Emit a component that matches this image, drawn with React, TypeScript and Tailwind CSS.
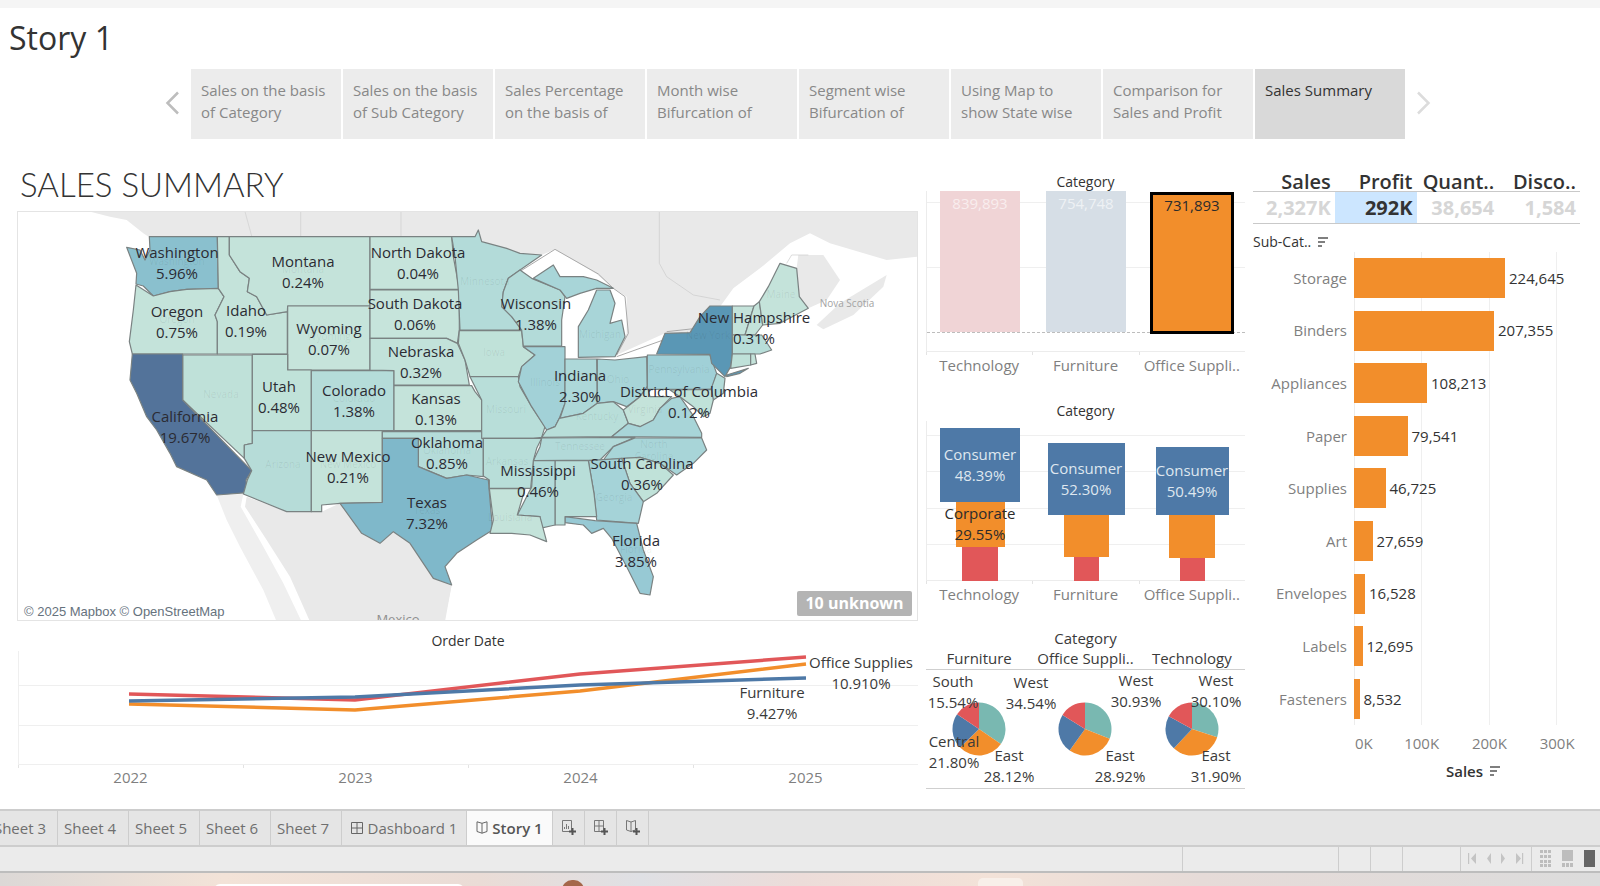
import type { ReactNode } from "react";

const tabs = [
  ["Sales on the basis", "of Category"],
  ["Sales on the basis", "of Sub Category"],
  ["Sales Percentage", "on the basis of"],
  ["Month wise", "Bifurcation of"],
  ["Segment wise", "Bifurcation of"],
  ["Using Map to", "show State wise"],
  ["Comparison for", "Sales and Profit"],
];

// state shapes, traced in 3x crop coordinates
const westStates: [string, string][] = [
  ["448,110 652,110 655,265 560,268 510,275 460,288 430,258 408,252 410,220 380,142 420,150 435,180 450,150", "#8ac0ce"],
  ["408,255 460,288 510,275 560,268 655,265 672,290 645,345 652,365 652,462 397,462 388,425 400,330", "#c4e3da"],
  ["548,465 757,465 757,730 733,735 733,775 548,600", "#bfe1d9"],
  ["397,462 548,462 548,600 755,812 738,840 742,878 650,885 620,840 530,800 510,760 470,690 440,650 410,580 390,540", "#53739a"],
  ["652,110 688,110 688,165 720,215 748,235 742,275 770,290 800,345 862,335 862,462 652,462 652,365 645,345 672,290 655,265", "#c4e3da"],
  ["688,110 1110,110 1110,318 863,318 862,335 800,345 770,290 742,275 748,235 720,215 688,165", "#c4e3da"],
  ["863,318 1110,318 1110,510 863,510", "#c6e4db"],
  ["757,463 863,463 863,510 934,510 934,692 757,692", "#c0e2d9"],
  ["934,512 1182,512 1182,692 934,692", "#b5dcd9"],
  ["757,692 934,692 934,935 860,935 730,882 742,840 755,812 733,775 733,735 757,730", "#b6dcd8"],
  ["934,692 1147,692 1147,907 1020,910 965,915 965,935 934,935", "#c4e3da"],
  ["1110,110 1355,110 1360,170 1378,268 1110,268", "#c6e4db"],
  ["1110,270 1378,270 1378,390 1372,430 1340,415 1110,415", "#c6e4db"],
  ["1110,415 1340,415 1372,430 1395,480 1408,555 1182,555 1182,512 1110,510", "#c2e2da"],
  ["1182,557 1415,557 1425,575 1445,600 1445,692 1182,692", "#c4e3da"],
  ["1147,695 1450,695 1450,830 1400,825 1340,835 1255,800 1255,715 1147,715", "#b5dcd9"],
  ["1147,715 1255,715 1255,800 1340,835 1400,825 1465,840 1470,900 1478,990 1430,1020 1370,1060 1335,1100 1355,1155 1300,1135 1270,1090 1230,1030 1180,995 1140,1030 1085,1000 1020,910 1147,907", "#7fb8ca"],
];

const eastStates: [string, string][] = [
  ["35,110 105,110 115,90 125,125 200,145 240,160 305,165 240,210 205,235 190,275 185,320 215,350 245,390 60,390 55,270 45,170", "#b3dbd9"],
  ["58,392 245,392 250,440 285,465 245,500 235,530 90,530 75,480 55,430", "#c0e2d9"],
  ["90,530 235,530 240,560 275,620 315,680 305,712 280,715 125,715 125,600 105,560", "#b8ded9"],
  ["205,235 240,210 275,235 360,270 375,290 365,360 365,438 250,438 245,390 215,350 185,320 190,275", "#b3dbd9"],
  ["250,440 375,440 375,610 358,655 345,680 320,690 275,620 235,545 245,500 285,465", "#a2d1d7"],
  ["415,472 415,380 445,330 470,270 510,270 525,310 510,370 545,360 555,410 525,470", "#a8d5d8"],
  ["280,235 340,195 360,230 430,230 470,240 520,265 470,265 420,280 380,295 360,270", "#a8d5d8"],
  ["375,477 470,477 472,610 430,640 360,655 375,610", "#add8d9"],
  ["472,477 525,480 620,470 622,560 600,590 560,620 520,605 472,610", "#a8d5d8"],
  ["358,655 430,640 472,610 520,605 550,630 565,670 515,710 305,712 320,690 345,680", "#b8ded9"],
  ["550,630 600,590 622,560 630,590 695,590 660,625 640,660 600,680 565,670", "#c4e3da"],
  ["622,465 810,465 830,520 815,568 622,568", "#a0d0d7"],
  ["650,462 675,400 750,398 780,350 810,318 877,318 877,460 872,500 855,530 815,490 810,463", "#5a97b5"],
  ["860,525 925,505 900,520 860,530", "#5a97b5"],
  ["877,318 942,318 915,405 877,405", "#c4e3da"],
  ["942,318 958,305 968,375 945,405 915,405", "#c4e3da"],
  ["958,305 985,260 1020,190 1070,205 1078,290 1105,325 1020,370 968,375", "#c4e3da"],
  ["877,405 965,405 995,450 960,462 877,462", "#b8ded9"],
  ["877,462 932,462 932,495 872,505", "#bfe1d9"],
  ["932,462 945,462 950,490 932,495", "#c4e3da"],
  ["830,520 855,535 850,580 820,600 812,570", "#b3dbd9"],
  ["515,710 565,670 600,680 640,660 660,625 695,595 720,590 755,640 785,700 785,712", "#a8d5d8"],
  ["690,570 815,568 820,600 810,640 790,650 760,620 720,590", "#c0e2d9"],
  ["305,714 585,712 520,740 480,780 280,782 300,740", "#b2dad9"],
  ["585,714 785,714 800,750 760,790 710,825 660,790 600,772 490,780 520,740", "#a8d5d8"],
  ["545,775 600,772 660,790 700,825 650,880 610,905 570,850", "#c0e2d9"],
  ["445,782 545,775 570,850 610,905 595,970 470,960 462,880", "#a5d3d8"],
  ["375,950 465,962 590,970 610,1050 640,1130 630,1185 600,1180 560,1100 515,1015 490,985 455,1000 430,975 375,968", "#97c9d4"],
  ["345,782 445,782 462,880 470,950 375,950 375,975 345,975", "#b8ded9"],
  ["280,782 345,782 345,975 300,985 300,950 232,945 255,900 275,860", "#b3dbd9"],
  ["130,715 305,715 290,745 280,782 272,865 148,865 148,840 130,828", "#b8ded9"],
  ["148,866 255,866 232,945 300,950 320,1025 270,1005 215,1000 150,1000 160,960", "#c4e3da"],
];

const stateLabels: [string, string, number, number][] = [
  ["Washington", "5.96%", 177, 252],
  ["Montana", "0.24%", 303, 261],
  ["North Dakota", "0.04%", 418, 252],
  ["South Dakota", "0.06%", 415, 303],
  ["Oregon", "0.75%", 177, 311],
  ["Idaho", "0.19%", 246, 310],
  ["Wyoming", "0.07%", 329, 328],
  ["Nebraska", "0.32%", 421, 351],
  ["Utah", "0.48%", 279, 386],
  ["Colorado", "1.38%", 354, 390],
  ["Kansas", "0.13%", 436, 398],
  ["California", "19.67%", 185, 416],
  ["New Mexico", "0.21%", 348, 456],
  ["Oklahoma", "0.85%", 447, 442],
  ["Texas", "7.32%", 427, 502],
  ["Wisconsin", "1.38%", 536, 303],
  ["Indiana", "2.30%", 580, 375],
  ["District of Columbia", "0.12%", 689, 391],
  ["New Hampshire", "0.31%", 754, 317],
  ["Mississippi", "0.46%", 538, 470],
  ["South Carolina", "0.36%", 642, 463],
  ["Florida", "3.85%", 636, 540],
];

const faintLabels: [string, number, number][] = [
  ["Nevada", 221, 394], ["Arizona", 283, 464], ["Minnesota", 485, 281], ["Iowa", 494, 352],
  ["Illinois", 545, 382], ["Michigan", 600, 334], ["Ohio", 618, 379], ["Pennsylvania", 679, 369],
  ["New York", 708, 335], ["Missouri", 506, 409], ["Kentucky", 597, 416], ["Tennessee", 580, 446],
  ["North", 654, 444], ["Carolina", 654, 456], ["Virginia", 645, 409], ["Arkansas", 507, 461],
  ["Louisiana", 510, 517], ["Georgia", 614, 497], ["Maine", 781, 294], ["Montana", 303, 269],
  ["Colorado", 354, 398], ["Texas", 427, 510], ["Oregon", 177, 319], ["Washington", 177, 261],
  ["Wyoming", 329, 336], ["New Mexico", 348, 464], ["Florida", 636, 549], ["Oklahoma", 447, 450],
];

const subCategories: [string, number, string][] = [
  ["Storage", 151, "224,645"],
  ["Binders", 140, "207,355"],
  ["Appliances", 73, "108,213"],
  ["Paper", 53.5, "79,541"],
  ["Supplies", 31.5, "46,725"],
  ["Art", 18.5, "27,659"],
  ["Envelopes", 11, "16,528"],
  ["Labels", 8.5, "12,695"],
  ["Fasteners", 5.5, "8,532"],
];

const pies = [
  [34.54, 28.12, 21.8, 15.54],
  [30.93, 28.92, 24, 16.15],
  [30.1, 31.9, 21, 17],
];

function Pie({ shares }: { shares: number[] }) {
  const colors = ["#79b8b1", "#f28e2b", "#4e79a7", "#e15759"];
  let acc = 0;
  return (
    <svg width="54" height="54" viewBox="-27 -27 54 54">
      {shares.map((s, i) => {
        const a0 = (acc / 100) * Math.PI * 2;
        acc += s;
        const a1 = (acc / 100) * Math.PI * 2;
        const d = `M0 0L${26.5 * Math.sin(a0)} ${-26.5 * Math.cos(a0)}A26.5 26.5 0 ${s > 50 ? 1 : 0} 1 ${26.5 * Math.sin(a1)} ${-26.5 * Math.cos(a1)}Z`;
        return <path key={i} d={d} fill={colors[i]} />;
      })}
    </svg>
  );
}

function SortIcon() {
  return (
    <svg width="11" height="10" viewBox="0 0 11 10" className="shrink-0">
      <path d="M1 1h10M1 5h7M1 9h4" stroke="#555" strokeWidth="1.6" />
    </svg>
  );
}

function TwoLine({ className, children }: { className: string; children: ReactNode }) {
  return (
    <div className={`absolute -translate-x-1/2 whitespace-nowrap text-center text-[15px] leading-[21px] ${className}`}>
      {children}
    </div>
  );
}

function MapPanel() {
  return (
    <div className="relative h-[410px] w-[901px] overflow-hidden border border-[#e4e4e4] bg-white">
      <svg className="absolute -left-px -top-px" width="901" height="410" viewBox="17 211 901 410">
        <g transform="translate(0 200) scale(0.33333)">
          <polygon points="270,35 1440,35 1440,112 448,112 430,100 380,60 330,50" fill="#e9e9e9" />
          <polygon points="650,885 730,882 722,920 790,1040 850,1150 905,1265 830,1265 790,1170 720,1040 680,960" fill="#efefef" />
          <polygon points="740,890 860,935 965,935 1020,910 1085,1000 1140,1030 1180,995 1230,1030 1270,1090 1300,1135 1355,1155 1335,1265 930,1265 870,1130 800,1020 735,920" fill="#e9e9e9" />
          <path d="M902 35V110M1203 35V110M735 35L755 108" stroke="#cfcfcf" strokeWidth="2" fill="none" />
        </g>
        <g transform="translate(440 200) scale(0.33333)">
          <polygon points="-5,35 1433,35 1433,170 1340,180 1170,130 1110,100 1050,130 960,205 880,265 840,320 780,350 750,398 675,400 530,465 560,400 560,290 520,265 470,222 345,148 305,165 240,160 200,145 125,125 115,90 105,110 -5,110" fill="#e9e9e9" />
          <polygon points="1075,165 1150,165 1200,240 1160,300 1105,325 1078,290 1070,205" fill="#e9e9e9" />
          <polygon points="1130,375 1200,310 1340,225 1330,260 1240,345 1150,388" fill="#e9e9e9" />
          <polygon points="-5,1150 35,1155 12,1265 -5,1265" fill="#e9e9e9" />
          <path d="M658 35V190L680 230L760 285L840 300M1040 190L1055 165L1105 165" stroke="#cacaca" strokeWidth="2" fill="none" />
          <path d="M215 230L345 148L475 222L520 265L555 290L565 400L530 465M530 470L670 420M680 395L770 385" stroke="#a9a9a9" strokeWidth="3" fill="none" />
        </g>
        <g transform="translate(0 200) scale(0.33333)">
          {westStates.map(([points, fill], i) => (
            <polygon key={i} points={points} fill={fill} stroke="#7a8282" strokeWidth="3.6" strokeLinejoin="round" />
          ))}
        </g>
        <g transform="translate(440 200) scale(0.33333)">
          {eastStates.map(([points, fill], i) => (
            <polygon key={i} points={points} fill={fill} stroke="#7a8282" strokeWidth="3.6" strokeLinejoin="round" />
          ))}
        </g>
        {faintLabels.map(([t, x, y]) => (
          <text key={t + x} x={x} y={y} textAnchor="middle" dominantBaseline="central" fontSize="10" fill="#000" fillOpacity="0.08">
            {t}
          </text>
        ))}
        <text x="847" y="303" textAnchor="middle" dominantBaseline="central" fontSize="10" fill="#a3a3a3">Nova Scotia</text>
        <text x="398" y="619" textAnchor="middle" dominantBaseline="central" fontSize="13" fill="#8f8f8f">Mexico</text>
        {stateLabels.map(([name, pct, x, y]) => (
          <g key={name} fontSize="15" fill="#2b2b33" textAnchor="middle" dominantBaseline="central">
            <text x={x} y={y}>{name}</text>
            <text x={x} y={y + 21}>{pct}</text>
          </g>
        ))}
      </svg>
      <div className="absolute bottom-0 left-[3px] bg-white/80 px-[3px] font-['Liberation_Sans',sans-serif] text-[13px] leading-[16px] text-[#66727d]">
        © 2025 Mapbox © OpenStreetMap
      </div>
      <div className="absolute bottom-[4px] right-[5px] flex h-[25px] w-[115px] items-center justify-center rounded-[2px] bg-[#b4b4b4] text-[16px] font-bold text-white">
        10 unknown
      </div>
    </div>
  );
}

function LineChart() {
  return (
    <div className="ml-px flex w-[900px] flex-col">
      <div className="mt-[10px] h-5 text-center text-[14px] leading-5 text-[#333]">Order Date</div>
      <div className="relative h-[114px]">
        <svg className="absolute inset-0" width="900" height="114" viewBox="18 651 900 114">
          <path d="M18 685.5H918M18 725.5H918M18 764.5H918M18.5 651V765" stroke="#efefef" fill="none" />
          <polyline points="129,704 355,710 580,691 806,664" fill="none" stroke="#f28e2b" strokeWidth="3.5" />
          <polyline points="129,694 355,700 580,674 806,657" fill="none" stroke="#e15759" strokeWidth="3.5" />
          <polyline points="129,701 355,697 580,685 806,678" fill="none" stroke="#4e79a7" strokeWidth="3.5" />
        </svg>
        <TwoLine className="left-[843px] top-[1px] text-[#3a3a3a]">
          Office Supplies
          <br />
          10.910%
        </TwoLine>
        <TwoLine className="left-[754px] top-[31px] text-[#3a3a3a]">
          Furniture
          <br />
          9.427%
        </TwoLine>
      </div>
      <div className="grid grid-cols-4">
        {["2022", "2023", "2024", "2025"].map((y) => (
          <div key={y} className="flex flex-col">
            <div className="h-[3px] w-px bg-[#e3e3e3]" />
            <div className="text-center text-[15px] leading-[18px] text-[#7f7f7f]">{y}</div>
          </div>
        ))}
      </div>
    </div>
  );
}

function CategoryAxis() {
  return (
    <div className="grid grid-cols-3">
      {["Technology", "Furniture", "Office Suppli.."].map((c) => (
        <div key={c} className="flex flex-col">
          <div className="h-[3px] w-px bg-[#e3e3e3]" />
          <div className="text-center text-[15px] leading-[20px] text-[#7f7f7f]">{c}</div>
        </div>
      ))}
    </div>
  );
}

function SalesBars() {
  return (
    <div className="flex flex-col">
      <div className="h-[19px] text-center text-[14px] leading-5 text-[#333]">Category</div>
      <div className="relative h-[161px] border-b border-l border-[#ececec]">
        <div className="absolute inset-x-0 top-[11px] h-px bg-[#efefef]" />
        <div className="absolute inset-x-0 top-[76px] h-px bg-[#efefef]" />
        <div className="absolute inset-x-0 top-[141px] border-t border-dashed border-[#bdbdbd]" />
        <div className="relative grid h-[141px] grid-cols-3 items-end justify-items-center">
          <div className="h-[141px] w-[80px] bg-[#f0d4d6] pt-[2px] text-center text-[15px] leading-[20px] text-white/60">839,893</div>
          <div className="h-[141px] w-[80px] bg-[#d6dee6] pt-[2px] text-center text-[15px] leading-[20px] text-white/60">754,748</div>
          <div className="-mb-[2px] h-[142px] w-[84px] border-[3px] border-black bg-[#f28e2b] text-center text-[15px] leading-[20px] text-[#2b2b2b]">731,893</div>
        </div>
      </div>
      <CategoryAxis />
    </div>
  );
}

function SegmentColumn({ blue, orange, red, top, mid }: { blue: string; orange: string; red: string; top: string; mid?: string }) {
  return (
    <div className="flex h-[160px] flex-col items-center justify-end">
      <div className={`flex items-center justify-center bg-[#4e79a7] text-center text-[15px] leading-[21px] text-[#dfe7ef] ${blue}`}>
        <div>
          Consumer
          <br />
          {top}
        </div>
      </div>
      <div className={`flex items-center justify-center overflow-visible whitespace-nowrap bg-[#f28e2b] text-center text-[15px] leading-[21px] text-[#2b2b2b] ${orange}`}>
        {mid && (
          <div>
            Corporate
            <br />
            {mid}
          </div>
        )}
      </div>
      <div className={`bg-[#e15759] ${red}`} />
    </div>
  );
}

function SegmentBars() {
  return (
    <div className="flex flex-col">
      <div className="mt-[26px] h-5 text-center text-[14px] leading-5 text-[#333]">Category</div>
      <div className="relative h-[160px] border-b border-l border-[#ececec]">
        <div className="absolute inset-x-0 top-[14px] h-px bg-[#efefef]" />
        <div className="absolute inset-x-0 top-[50px] h-px bg-[#efefef]" />
        <div className="absolute inset-x-0 top-[87px] h-px bg-[#efefef]" />
        <div className="absolute inset-x-0 top-[123px] h-px bg-[#efefef]" />
        <div className="relative grid grid-cols-3">
          <SegmentColumn blue="h-[74px] w-[80px]" orange="h-[45px] w-[49px]" red="h-[34px] w-[36px]" top="48.39%" mid="29.55%" />
          <SegmentColumn blue="h-[72px] w-[77px]" orange="h-[42px] w-[45px]" red="h-[24px] w-[25px]" top="52.30%" />
          <SegmentColumn blue="h-[68px] w-[73px]" orange="h-[43px] w-[46px]" red="h-[23px] w-[25px]" top="50.49%" />
        </div>
      </div>
      <CategoryAxis />
    </div>
  );
}

function RegionPies() {
  return (
    <div className="mt-[24px] flex flex-col">
      <div className="h-[20px] text-center text-[15px] leading-5 text-[#3a3a3a]">Category</div>
      <div className="grid h-[22px] grid-cols-3 border-b border-[#cfcfcf] text-center text-[15px] leading-5 text-[#3a3a3a]">
        <div>Furniture</div>
        <div>Office Suppli..</div>
        <div>Technology</div>
      </div>
      <div className="relative grid h-[119px] grid-cols-3 place-items-center border-b border-[#cfcfcf] text-[#3a3a3a]">
        {pies.map((p, i) => (
          <Pie key={i} shares={p} />
        ))}
        <TwoLine className="left-[27px] top-[1px]">South<br />15.54%</TwoLine>
        <TwoLine className="left-[105px] top-[2px]">West<br />34.54%</TwoLine>
        <TwoLine className="left-[28px] top-[61px]">Central<br />21.80%</TwoLine>
        <TwoLine className="left-[83px] top-[75px]">East<br />28.12%</TwoLine>
        <TwoLine className="left-[210px] top-[0px]">West<br />30.93%</TwoLine>
        <TwoLine className="left-[194px] top-[75px]">East<br />28.92%</TwoLine>
        <TwoLine className="left-[290px] top-[0px]">West<br />30.10%</TwoLine>
        <TwoLine className="left-[290px] top-[75px]">East<br />31.90%</TwoLine>
      </div>
    </div>
  );
}

function RightPanel() {
  return (
    <div className="flex w-[327px] flex-col">
      <div className="grid h-[20px] grid-cols-4 border-b border-[#c9c9c9] text-right text-[20px] font-semibold leading-[20px] text-[#333]">
        {["Sales", "Profit", "Quant..", "Disco.."].map((h) => (
          <div key={h} className="whitespace-nowrap pr-[4px]">{h}</div>
        ))}
      </div>
      <div className="grid h-[32px] grid-cols-4 border-b border-[#c9c9c9] text-right text-[20px] font-bold leading-[31px] text-[#d6d6d6]">
        <div className="pr-[4px]">2,327K</div>
        <div className="bg-[#cce6ff] pr-[4px] text-[#333]">292K</div>
        <div className="pr-[4px]">38,654</div>
        <div className="pr-[4px]">1,584</div>
      </div>
      <div className="flex h-[28px] items-center gap-[6px] pt-[8px] text-[14px] text-[#333]">
        Sub-Cat..
        <SortIcon />
      </div>
      <div className="relative">
        <div className="absolute bottom-0 left-[101px] top-0 w-px bg-[#ececec]" />
        <div className="absolute bottom-0 left-[168px] top-0 w-px bg-[#efefef]" />
        <div className="absolute bottom-0 left-[236px] top-0 w-px bg-[#efefef]" />
        <div className="absolute bottom-0 left-[303px] top-0 w-px bg-[#efefef]" />
        {subCategories.map(([name, w, val]) => (
          <div key={name} className="relative flex h-[52.6px] items-center">
            <div className="w-[101px] shrink-0 pr-[7px] text-right text-[15px] text-[#7f7f7f]">{name}</div>
            <div className="h-10 bg-[#f28e2b]" style={{ width: w }} />
            <div className="pl-[4px] text-[15px] text-[#333]">{val}</div>
          </div>
        ))}
      </div>
      <div className="ml-[67px] grid h-[30px] w-[271px] grid-cols-4 pt-[8px] text-center text-[15px] leading-[20px] text-[#7f7f7f]">
        <div className="pl-[20px]">0K</div>
        <div>100K</div>
        <div>200K</div>
        <div>300K</div>
      </div>
      <div className="ml-[170px] flex h-[20px] w-[100px] items-center justify-center gap-[6px] pt-[12px] text-[15px] font-semibold text-[#333]">
        Sales
        <SortIcon />
      </div>
    </div>
  );
}

function NewSheetIcon({ kind }: { kind: "sheet" | "dash" | "story" }) {
  return (
    <svg width="16" height="16" viewBox="0 0 16 16" fill="none">
      {kind === "sheet" && <path d="M1.5 .5H10.5V11.5H1.5ZM3.5 9V7M5.5 9V4M7.5 9V6" stroke="#777" />}
      {kind === "dash" && <path d="M1.5 .5H10.5V11.5H1.5ZM1.5 6H10.5M6 .5V11.5" stroke="#777" />}
      {kind === "story" && <path d="M1.5 .5L6 2L10.5 .5V10L6 11.5L1.5 10ZM6 2V11.5" stroke="#777" />}
      <path d="M11.5 8V15M8 11.5H15" stroke="#555" strokeWidth="2" />
    </svg>
  );
}

function BottomBars() {
  return (
    <div className="flex flex-col">
      <div className="flex h-[38px] border-y-2 border-[#cdcdcd] bg-[#e5e5e5] text-[15px] text-[#6f6f6f]">
        <div className="flex w-[58px] items-center justify-end overflow-hidden border-r border-[#cdcdcd] pr-[11px]">
          <span className="shrink-0">Sheet 3</span>
        </div>
        {["Sheet 4", "Sheet 5", "Sheet 6", "Sheet 7"].map((s) => (
          <div key={s} className="flex w-[71px] items-center border-r border-[#cdcdcd] pl-[6px]">{s}</div>
        ))}
        <div className="flex w-[125px] items-center justify-center gap-[5px] border-r border-[#cdcdcd]">
          <svg width="12" height="12" viewBox="0 0 12 12" fill="none">
            <path d="M.5 .5H11.5V11.5H.5ZM.5 6H11.5M6 .5V11.5" stroke="#666" />
          </svg>
          Dashboard 1
        </div>
        <div className="flex w-[86px] items-center justify-center gap-[4px] border-r border-[#cdcdcd] bg-[#fafafa] font-semibold text-[#555]">
          <svg width="12" height="13" viewBox="0 0 12 13" fill="none">
            <path d="M1 .8L6 2.3L11 .8V10.5L6 12.2L1 10.5ZM6 2.3V12.2" stroke="#666" />
          </svg>
          Story 1
        </div>
        <div className="flex w-[32px] items-center justify-center border-r border-[#cdcdcd]"><NewSheetIcon kind="sheet" /></div>
        <div className="flex w-[32px] items-center justify-center border-r border-[#cdcdcd]"><NewSheetIcon kind="dash" /></div>
        <div className="flex w-[32px] items-center justify-center border-r border-[#cdcdcd]"><NewSheetIcon kind="story" /></div>
      </div>
      <div className="flex h-[26px] border-b-2 border-[#bdbdbd] bg-[#ebebeb]">
        <div className="w-[1183px] border-r border-[#cdcdcd]" />
        <div className="w-[156px] border-r border-[#cdcdcd]" />
        <div className="w-[32px] border-r border-[#cdcdcd]" />
        <div className="w-[32px] border-r border-[#cdcdcd]" />
        <div className="w-[58px] border-r border-[#cdcdcd]" />
        <div className="flex w-[71px] items-center justify-center border-r border-[#cdcdcd]">
          <svg width="56" height="11" viewBox="0 0 56 11" fill="#c4c4c4">
            <path d="M0 0h1.2v11H0zM8 0v11L3 5.5zM23 0v11l-4-5.5zM33 0v11l4-5.5zM48 0v11l5-5.5zM54 0h1.2v11H54z" />
          </svg>
        </div>
        <div className="flex flex-1 items-center gap-[10px] pl-[8px]">
          <svg width="12" height="17" viewBox="0 0 12 17" fill="#bdbdbd">
            <path d="M0 0h3v3H0zM4 0h3v3H4zM8 0h3v3H8zM0 5h3v3H0zM4 5h3v3H4zM8 5h3v3H8zM0 10h3v3H0zM4 10h3v3H4zM8 10h3v3H8zM0 14h3v3H0zM4 14h3v3H4zM8 14h3v3H8z" />
          </svg>
          <svg width="12" height="17" viewBox="0 0 12 17" fill="#bdbdbd">
            <path d="M0 0h11v11H0zM0 13h3v4H0zM4 13h3v4H4zM8 13h3v4H8z" />
          </svg>
          <div className="h-[17px] w-[11px] bg-[#666]" />
        </div>
      </div>
      <div className="relative h-[13px] overflow-hidden bg-[linear-gradient(90deg,#dcd8d6_0%,#f3e3d8_14%,#eadcd6_30%,#dfe0e4_40%,#ecdcd9_50%,#f3e2d8_62%,#e6dbd8_75%,#dcdcdc_100%)]">
        <div className="absolute left-[214px] top-[11px] h-[10px] w-[250px] rounded-t-[6px] bg-white" />
        <div className="absolute left-[562px] top-[7px] h-[20px] w-[22px] rounded-full bg-[#a5674a]" />
        <div className="absolute left-[978px] top-[5px] h-[20px] w-[45px] rounded-t-[5px] bg-[#f8efe9]" />
      </div>
    </div>
  );
}

export default function App() {
  return (
    <div className="flex h-[886px] w-[1600px] flex-col overflow-hidden bg-white font-['Open_Sans',sans-serif]">
      <div className="h-2 bg-[#f5f5f5]" />
      <div className="flex h-[60px] items-center pl-[9px] text-[32px] text-[#333]">Story 1</div>

      <div className="mt-px flex h-[70px] pl-[165px]">
        <div className="flex w-[26px] items-center pb-[2px]">
          <svg width="15" height="24" viewBox="0 0 15 24" fill="none">
            <path d="M13 1.5L2.5 12L13 22.5" stroke="#bdbdbd" strokeWidth="2.5" />
          </svg>
        </div>
        <div className="flex gap-[2px]">
          {tabs.map((t) => (
            <div key={t[0] + t[1]} className="w-[150px] bg-[#ececec] px-[10px] pt-[10px] text-[15px] leading-[22px] text-[#888]">
              {t[0]}
              <br />
              {t[1]}
            </div>
          ))}
          <div className="w-[150px] bg-[#d9d9d9] px-[10px] pt-[10px] text-[15px] leading-[22px] text-[#333]">Sales Summary</div>
        </div>
        <div className="flex w-[26px] items-center justify-end pb-[2px]">
          <svg width="15" height="24" viewBox="0 0 15 24" fill="none">
            <path d="M2 1.5L12.5 12L2 22.5" stroke="#dcdcdc" strokeWidth="2.5" />
          </svg>
        </div>
      </div>

      <div className="mt-[33px] flex h-[638px] gap-2 pl-[17px]">
        <div className="flex w-[901px] flex-col">
          <div className="h-[39px] pl-[3px] font-['Lato',sans-serif] text-[33px] font-light leading-[24px] text-[#333]">SALES SUMMARY</div>
          <MapPanel />
          <LineChart />
        </div>
        <div className="flex w-[319px] flex-col">
          <SalesBars />
          <SegmentBars />
          <RegionPies />
        </div>
        <RightPanel />
      </div>

      <BottomBars />
    </div>
  );
}
